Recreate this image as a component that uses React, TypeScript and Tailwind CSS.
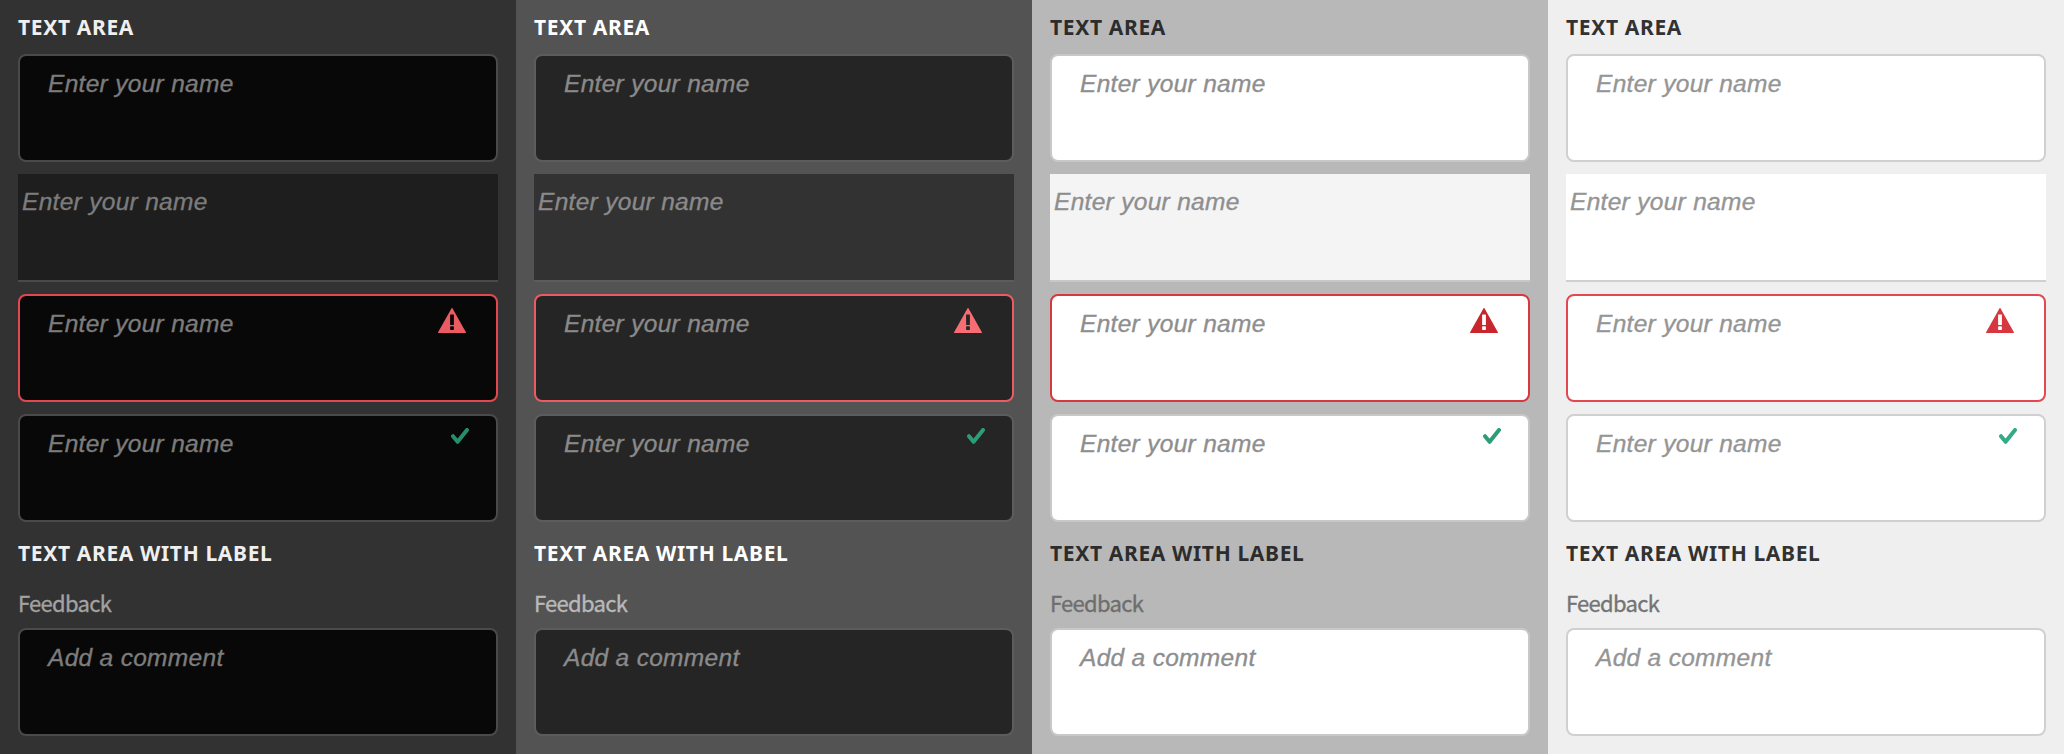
type Theme = {
  id: string;
  page: string;
  heading: string;
  label: string;
  placeholder: string;
  field: string;
  quiet: string;
  line: string;
  invalidLine: string;
  alert: string;
  valid: string;
};

const themes: Theme[] = [
  {
    id: "darkest",
    page: "bg-[#323232]",
    heading: "text-[#efefef]",
    label: "text-[#a2a2a2]",
    placeholder: "text-[#7c7c7c]",
    field: "bg-[#080808]",
    quiet: "bg-[#1e1e1e]",
    line: "border-[#4a4a4a]",
    invalidLine: "border-[#e34850]",
    alert: "text-[#ec5b62]",
    valid: "text-[#268e6c]",
  },
  {
    id: "dark",
    page: "bg-[#535353]",
    heading: "text-white",
    label: "text-[#b9b9b9]",
    placeholder: "text-[#8a8a8a]",
    field: "bg-[#252525]",
    quiet: "bg-[#323232]",
    line: "border-[#5c5c5c]",
    invalidLine: "border-[#ec5b62]",
    alert: "text-[#f76d74]",
    valid: "text-[#2d9d78]",
  },
  {
    id: "light",
    page: "bg-[#b8b8b8]",
    heading: "text-[#2c2c2c]",
    label: "text-[#6e6e6e]",
    placeholder: "text-[#8e8e8e]",
    field: "bg-white",
    quiet: "bg-[#f4f4f4]",
    line: "border-[#c8c8c8]",
    invalidLine: "border-[#d7373f]",
    alert: "text-[#c9252d]",
    valid: "text-[#2d9d78]",
  },
  {
    id: "lightest",
    page: "bg-[#efefef]",
    heading: "text-[#323232]",
    label: "text-[#747474]",
    placeholder: "text-[#959595]",
    field: "bg-white",
    quiet: "bg-white",
    line: "border-[#d0d0d0]",
    invalidLine: "border-[#e34850]",
    alert: "text-[#d7373f]",
    valid: "text-[#33ab84]",
  },
];

function AlertIcon({ className }: { className: string }) {
  return (
    <svg width="28" height="25" viewBox="0 0 28 25" className={className}>
      <path
        fill="currentColor"
        fillRule="evenodd"
        d="M13.4.4a.7.7 0 0 1 1.2 0L27.9 24.2a.5.5 0 0 1-.5.8H.6a.5.5 0 0 1-.5-.8ZM12.6 6.5a.5.5 0 0 0-.5.5v9.6a.5.5 0 0 0 .5.5h2.8a.5.5 0 0 0 .5-.5V7a.5.5 0 0 0-.5-.5ZM12.7 18.3a.6.6 0 0 0-.6.6v2.4a.6.6 0 0 0 .6.6h2.6a.6.6 0 0 0 .6-.6v-2.4a.6.6 0 0 0-.6-.6Z"
      />
    </svg>
  );
}

function CheckIcon({ className }: { className: string }) {
  return (
    <svg width="18" height="16" viewBox="0 0 18 16" className={className}>
      <path
        d="M2 8.2 6.6 13.8 16 2"
        fill="none"
        stroke="currentColor"
        strokeWidth="4"
        strokeLinecap="round"
        strokeLinejoin="round"
      />
    </svg>
  );
}

type FieldProps = {
  theme: Theme;
  text: string;
  state?: "invalid" | "valid";
};

function Field({ theme, text, state }: FieldProps) {
  const line = state === "invalid" ? theme.invalidLine : theme.line;
  return (
    <div className={`flex h-[108px] items-start justify-between rounded-lg border-2 pl-7 ${theme.field} ${line}`}>
      <Placeholder theme={theme} text={text} className="mt-3" />
      {state === "invalid" && <AlertIcon className={`mt-[11.5px] mr-[30px] ${theme.alert}`} />}
      {state === "valid" && <CheckIcon className={`mt-3 mr-[27px] ${theme.valid}`} />}
    </div>
  );
}

function Placeholder({ theme, text, className }: { theme: Theme; text: string; className: string }) {
  return (
    <span
      className={`font-['Liberation_Sans',sans-serif] text-[24.5px] leading-8 tracking-[0.3px] whitespace-nowrap italic [-webkit-text-stroke:0.35px_currentColor] ${className} ${theme.placeholder}`}
    >
      {text}
    </span>
  );
}

function Heading({ theme, text }: { theme: Theme; text: string }) {
  return (
    <h2
      className={`font-['Noto_Sans',sans-serif] text-[21px] leading-[30px] font-bold tracking-[0.65px] whitespace-nowrap ${theme.heading}`}
    >
      {text}
    </h2>
  );
}

function Panel({ theme }: { theme: Theme }) {
  return (
    <section className={`flex flex-col px-[18px] pt-3 ${theme.page}`}>
      <Heading theme={theme} text="TEXT AREA" />
      <div className="mt-3 flex flex-col gap-3">
        <Field theme={theme} text="Enter your name" />
        <div className={`flex h-[108px] items-start border-b-2 pl-1 ${theme.quiet} ${theme.line}`}>
          <Placeholder theme={theme} text="Enter your name" className="mt-3" />
        </div>
        <Field theme={theme} text="Enter your name" state="invalid" />
        <Field theme={theme} text="Enter your name" state="valid" />
      </div>
      <div className="mt-4">
        <Heading theme={theme} text="TEXT AREA WITH LABEL" />
      </div>
      <div
        className={`mt-[18px] font-['Noto_Sans_CJK_SC',sans-serif] text-[22px] leading-8 tracking-[-0.7px] [-webkit-text-stroke:0.35px_currentColor] ${theme.label}`}
      >
        Feedback
      </div>
      <div className="mt-[10px]">
        <Field theme={theme} text="Add a comment" />
      </div>
    </section>
  );
}

export default function App() {
  return (
    <main className="grid h-[754px] w-[2064px] grid-cols-4 overflow-hidden">
      {themes.map((theme) => (
        <Panel key={theme.id} theme={theme} />
      ))}
    </main>
  );
}
